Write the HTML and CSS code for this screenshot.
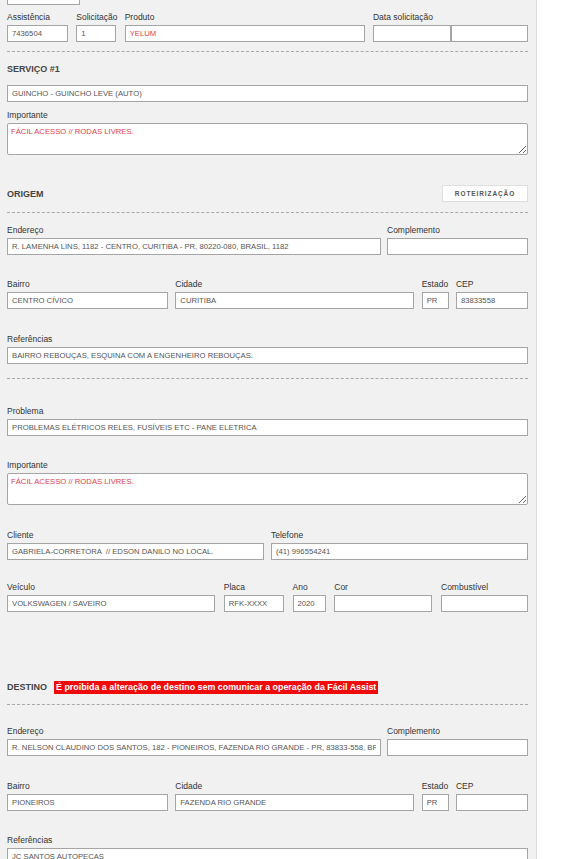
FILE: index.html
```html
<!DOCTYPE html>
<html lang="pt-BR">
<head>
<meta charset="utf-8">
<title>Serviço</title>
<link rel="stylesheet" href="styles.css">
</head>
<body>
<div class="panel">
  <div class="topbox"></div>

  <div class="row mt5">
    <div class="field w61"><label>Assistência</label><input class="inp" value="7436504" readonly></div>
    <div class="field w40"><label>Solicitação</label><input class="inp" value="1" readonly></div>
    <div class="field w240"><label>Produto</label><input class="inp red" value="YELUM" readonly></div>
    <div class="field w155"><label>Data solicitação</label>
      <div class="pair"><input class="inp" value="" readonly><input class="inp" value="" readonly></div>
    </div>
  </div>

  <hr class="dash mt9">

  <h3 class="heading mt11">SERVIÇO #1</h3>
  <input class="inp full mt9" value="GUINCHO - GUINCHO LEVE (AUTO)" readonly>
  <div class="field mt6"><label>Importante</label><textarea class="area red" readonly>FÁCIL ACESSO // RODAS LIVRES.</textarea></div>

  <div class="headrow mt30">
    <h3 class="heading hd-origem">ORIGEM</h3>
    <button class="btn" type="button">ROTEIRIZAÇÃO</button>
  </div>

  <hr class="dash mt10">

  <div class="row mt10">
    <div class="field w374"><label>Endereço</label><input class="inp" value="R. LAMENHA LINS, 1182 - CENTRO, CURITIBA - PR, 80220-080, BRASIL, 1182" readonly></div>
    <div class="field w141"><label>Complemento</label><input class="inp" value="" readonly></div>
  </div>

  <div class="row mt22">
    <div class="field w161"><label>Bairro</label><input class="inp" value="CENTRO CÍVICO" readonly></div>
    <div class="field w239"><label>Cidade</label><input class="inp" value="CURITIBA" readonly></div>
    <div class="field w27"><label>Estado</label><input class="inp" value="PR" readonly></div>
    <div class="field w72"><label>CEP</label><input class="inp" value="83833558" readonly></div>
  </div>

  <div class="field mt23"><label>Referências</label><input class="inp" value="BAIRRO REBOUÇAS, ESQUINA COM A ENGENHEIRO REBOUÇAS." readonly></div>

  <hr class="dash mt14">

  <div class="field mt25"><label>Problema</label><input class="inp" value="PROBLEMAS ELÉTRICOS RELES, FUSÍVEIS ETC - PANE ELETRICA" readonly></div>

  <div class="field mt22"><label>Importante</label><textarea class="area red" readonly>FÁCIL ACESSO // RODAS LIVRES.</textarea></div>

  <div class="row mt23">
    <div class="field w257"><label>Cliente</label><input class="inp" value="GABRIELA-CORRETORA  // EDSON DANILO NO LOCAL." readonly></div>
    <div class="field w257"><label>Telefone</label><input class="inp" value="(41) 996554241" readonly></div>
  </div>

  <div class="row mt20 veh">
    <div class="field w208"><label>Veículo</label><input class="inp" value="VOLKSWAGEN / SAVEIRO" readonly></div>
    <div class="field w60"><label>Placa</label><input class="inp" value="RFK-XXXX" readonly></div>
    <div class="field w33"><label>Ano</label><input class="inp" value="2020" readonly></div>
    <div class="field w98"><label>Cor</label><input class="inp" value="" readonly></div>
    <div class="field w87"><label>Combustível</label><input class="inp" value="" readonly></div>
  </div>

  <div class="headrow2 mt69">
    <h3 class="heading">DESTINO</h3>
    <span class="badge">É proibida a alteração de destino sem comunicar a operação da Fácil Assist</span>
  </div>

  <hr class="dash mt10">

  <div class="row mt19">
    <div class="field w374"><label>Endereço</label><input class="inp" value="R. NELSON CLAUDINO DOS SANTOS, 182 - PIONEIROS, FAZENDA RIO GRANDE - PR, 83833-558, BRASIL" readonly></div>
    <div class="field w141"><label>Complemento</label><input class="inp" value="" readonly></div>
  </div>

  <div class="row mt23">
    <div class="field w161"><label>Bairro</label><input class="inp" value="PIONEIROS" readonly></div>
    <div class="field w239"><label>Cidade</label><input class="inp" value="FAZENDA RIO GRANDE" readonly></div>
    <div class="field w27"><label>Estado</label><input class="inp" value="PR" readonly></div>
    <div class="field w72"><label>CEP</label><input class="inp" value="" readonly></div>
  </div>

  <div class="field mt22"><label>Referências</label><input class="inp" value="JC SANTOS AUTOPECAS" readonly></div>
</div>
</body>
</html>
```

FILE: styles.css
```css
* { box-sizing: border-box; }

html, body {
  margin: 0;
  padding: 0;
  background: #ffffff;
  height: 100%;
  overflow: hidden;
}

body {
  font-family: "Liberation Sans", Arial, sans-serif;
  color: #333;
}

.panel {
  width: 537px;
  min-height: 900px;
  background: #f1f1f1;
  border-right: 1px solid #dcdcdc;
  padding: 0 8px 0 7px;
  display: flex;
  flex-direction: column;
}

.topbox {
  width: 73px;
  height: 5px;
  background: #fff;
  border: 1px solid #a5a5a5;
  border-top: none;
}

.row {
  display: flex;
  justify-content: space-between;
  align-items: flex-end;
}

.field {
  display: flex;
  flex-direction: column;
}

.field label {
  display: block;
  font-size: 8.5px;
  line-height: 14px;
  height: 13px;
  margin-bottom: 2px;
  color: #333;
  white-space: nowrap;
  overflow: visible;
}

.inp {
  display: block;
  width: 100%;
  height: 17px;
  margin: 0;
  padding: 0 4px;
  border: 1px solid #a5a5a5;
  border-radius: 0;
  background: #fff;
  font-family: "Liberation Sans", Arial, sans-serif;
  font-size: 7.7px;
  color: #555;
  outline: none;
}

.full { width: 100%; }

.red { color: #e0404c; }

.pair { display: flex; }
.pair .inp:first-child { width: 78px; }
.pair .inp:last-child { width: 77px; }

.area {
  display: block;
  width: 100%;
  height: 32px;
  margin: 0;
  padding: 3px 3px;
  border: 1px solid #a5a5a5;
  border-radius: 2px;
  background: #fff;
  font-family: "Liberation Sans", Arial, sans-serif;
  font-size: 7.7px;
  line-height: 10px;
  resize: vertical;
  outline: none;
}
.area.red { color: #e0404c; }

.dash {
  width: 100%;
  height: 0;
  margin-bottom: 0;
  margin-left: 0;
  margin-right: 0;
  border: none;
  border-top: 1px dashed #a8a8a8;
}

.heading {
  margin: 0;
  font-size: 9px;
  line-height: 13px;
  font-weight: bold;
  color: #444;
}

.hd-origem {
  padding-top: 2px;
}

.headrow {
  display: flex;
  justify-content: space-between;
  align-items: center;
}

.headrow2 {
  display: flex;
  align-items: center;
  gap: 7px;
}

.btn {
  width: 86px;
  height: 17px;
  padding: 0;
  background: #fff;
  border: 1px solid #dedede;
  font-family: "Liberation Sans", Arial, sans-serif;
  font-weight: bold;
  font-size: 6.5px;
  letter-spacing: 0.9px;
  color: #555;
}

.badge {
  background: #f00a0a;
  color: #fff;
  font-weight: bold;
  font-size: 8.9px;
  line-height: 13px;
  padding: 0 2px;
  white-space: nowrap;
}

.w27 { width: 27px; }
.w33 { width: 33px; }
.w40 { width: 40px; }
.w60 { width: 60px; }
.w61 { width: 61px; }
.w72 { width: 72px; }
.w87 { width: 87px; }
.w98 { width: 98px; }
.w141 { width: 141px; }
.w155 { width: 155px; }
.w161 { width: 161px; }
.w208 { width: 208px; }
.w239 { width: 239px; }
.w240 { width: 240px; }
.w257 { width: 257px; }
.w374 { width: 374px; }

.mt5 { margin-top: 5px; }
.mt6 { margin-top: 6px; }
.mt9 { margin-top: 9px; }
.mt10 { margin-top: 10px; }
.mt11 { margin-top: 11px; }
.mt14 { margin-top: 14px; }
.mt19 { margin-top: 19px; }
.mt20 { margin-top: 20px; }
.mt22 { margin-top: 22px; }
.mt23 { margin-top: 23px; }
.mt25 { margin-top: 25px; }
.mt30 { margin-top: 30px; }
.mt69 { margin-top: 69px; }
```
